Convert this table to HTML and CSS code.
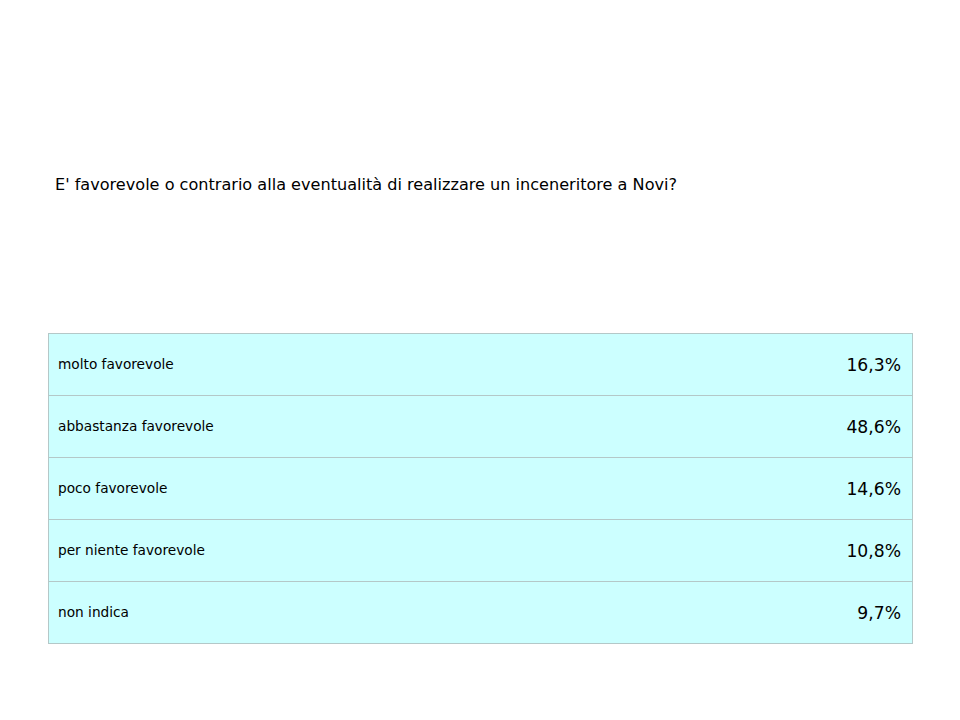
FILE: index.html
```html
<!DOCTYPE html>
<html lang="it">
<head>
<meta charset="utf-8">
<link rel="stylesheet" href="styles.css">
</head>
<body>
<div class="page">
  <h1 class="question">E' favorevole o contrario alla eventualità di realizzare un inceneritore a Novi?</h1>
  <div class="results">
    <div class="row"><span class="label">molto favorevole</span><span class="value">16,3%</span></div>
    <div class="row"><span class="label">abbastanza favorevole</span><span class="value">48,6%</span></div>
    <div class="row"><span class="label">poco favorevole</span><span class="value">14,6%</span></div>
    <div class="row"><span class="label">per niente favorevole</span><span class="value">10,8%</span></div>
    <div class="row"><span class="label">non indica</span><span class="value">9,7%</span></div>
  </div>
</div>
</body>
</html>
```
FILE: styles.css
```css
html, body {
  margin: 0;
  padding: 0;
  background: #ffffff;
}
.page {
  width: 960px;
  height: 720px;
  padding: 175px 47px 0 48px;
  box-sizing: border-box;
  font-family: "DejaVu Sans", Verdana, sans-serif;
  color: #000000;
}
.question {
  margin: 0 0 0 7px;
  font-size: 16.1px;
  font-weight: normal;
  line-height: 20px;
}
.results {
  margin-top: 138px;
  border: 1px solid #b4c8c8;
  background: #ccffff;
}
.row {
  height: 61px;
  display: flex;
  align-items: center;
  justify-content: space-between;
  padding: 0 11px 0 9px;
  border-top: 1px solid #b4c8c8;
}
.row:first-child {
  border-top: none;
}
.label {
  font-size: 13.7px;
  margin-top: -2px;
}
.value {
  font-size: 17.2px;
}
```
